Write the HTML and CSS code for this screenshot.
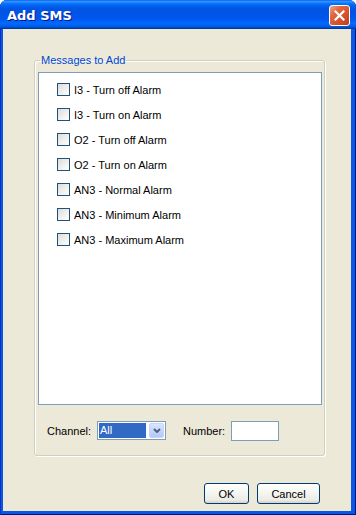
FILE: index.html
```html
<!DOCTYPE html>
<html lang="en">
<head>
  <meta charset="UTF-8">
  <title>Add SMS</title>
  <link rel="stylesheet" href="styles.css">
</head>
<body>
  <div class="window">
    <div class="titlebar">
      <span class="title">Add SMS</span>
      <button class="close" aria-label="Close">
        <svg width="11" height="11" viewBox="0 0 11 11"><path d="M1.5 1.5 L9.5 9.5 M9.5 1.5 L1.5 9.5" stroke="#fff" stroke-width="2.2" stroke-linecap="square"/></svg>
      </button>
    </div>
    <div class="client">
      <fieldset class="group">
        <legend>Messages to Add</legend>
        <div class="list">
          <label class="item"><span class="check"></span>I3 - Turn off Alarm</label>
          <label class="item"><span class="check"></span>I3 - Turn on Alarm</label>
          <label class="item"><span class="check"></span>O2 - Turn off Alarm</label>
          <label class="item"><span class="check"></span>O2 - Turn on Alarm</label>
          <label class="item"><span class="check"></span>AN3 - Normal Alarm</label>
          <label class="item"><span class="check"></span>AN3 - Minimum Alarm</label>
          <label class="item"><span class="check"></span>AN3 - Maximum Alarm</label>
        </div>
        <div class="controls">
          <span class="lbl channel-lbl">Channel:</span>
          <div class="combo">
            <span class="combo-value">All</span>
            <span class="combo-btn">
              <svg width="8" height="5" viewBox="0 0 8 5"><path d="M1 1 L4 4 L7 1" fill="none" stroke="#4d6185" stroke-width="2"/></svg>
            </span>
          </div>
          <span class="lbl number-lbl">Number:</span>
          <div class="field"></div>
        </div>
      </fieldset>
      <div class="buttons">
        <button class="btn ok">OK</button>
        <button class="btn cancel">Cancel</button>
      </div>
    </div>
  </div>
</body>
</html>
```

FILE: styles.css
```css
body {
  margin: 0;
  background: #fff;
  font-family: "Liberation Sans", Arial, sans-serif;
  font-size: 11px;
  color: #000;
}
.window {
  width: 356px;
  height: 515px;
  display: flex;
  flex-direction: column;
  background: #0a57e4;
  border-radius: 7px 7px 0 0;
  box-shadow: inset 1px 0 0 #0831c8, inset -1px -1px 0 #00138c;
  box-sizing: border-box;
  overflow: hidden;
}
.titlebar {
  height: 29px;
  flex: none;
  display: flex;
  align-items: center;
  padding: 0 6px 0 7px;
  background: linear-gradient(to bottom, #0058ee 0%, #3593ff 4%, #288eff 7%, #127dff 10%, #036ffc 14%, #0262ee 20%, #0057e5 28%, #0054e3 34%, #0055eb 60%, #005bf5 70%, #026afe 80%, #0062ef 88%, #0052d6 94%, #0040ab 97%, #003092 100%);
}
.title {
  flex: 1;
  color: #fff;
  font-family: "DejaVu Sans", Verdana, sans-serif;
  font-weight: bold;
  font-size: 13px;
  text-shadow: 1px 1px #0f1089;
  margin-top: 1px;
}
.close {
  width: 21px;
  height: 21px;
  padding: 0;
  border: 1px solid #fff;
  border-radius: 3px;
  background: linear-gradient(135deg, #f3a58c 0%, #e2673f 30%, #d5512b 65%, #c13c17 100%);
  display: flex;
  align-items: center;
  justify-content: center;
  margin-top: 1px;
}
.client {
  flex: 1;
  margin: 0 5px 4px 3px;
  background: #ece9d8;
  display: flex;
  flex-direction: column;
}
.group {
  margin: 25px 26px 0 31px;
  padding: 5px 2px 15px 3px;
  border: 1px solid #d0d0bf;
  border-radius: 3px;
  box-shadow: inset 1px 1px 0 #fff, 1px 1px 0 #fff;
  min-width: 0;
}
.group legend {
  color: #0046d5;
  padding: 0 1px;
  margin-left: 2px;
  line-height: 13px;
}
.list {
  height: 333px;
  box-sizing: border-box;
  border: 1px solid #7f9db9;
  background: #fff;
  padding: 4px 0 0 18px;
}
.item {
  height: 25px;
  display: flex;
  align-items: center;
  gap: 4px;
}
.check {
  width: 13px;
  height: 13px;
  box-sizing: border-box;
  border: 1px solid #1c5180;
  background: linear-gradient(135deg, #dcdcd7 0%, #f2f2ef 60%, #fff 100%);
}
.controls {
  display: flex;
  align-items: center;
  margin-top: 16px;
  padding-left: 9px;
  height: 19px;
}
.lbl {
  flex: none;
}
.channel-lbl {
  width: 50px;
}
.number-lbl {
  width: 48px;
  margin-left: 17px;
}
.combo {
  width: 69px;
  height: 19px;
  box-sizing: border-box;
  border: 1px solid #7f9db9;
  background: #fff;
  display: flex;
  align-items: stretch;
  padding: 1px;
  gap: 3px;
}
.combo-value {
  flex: 1;
  background: #316ac5;
  color: #fff;
  line-height: 15px;
  padding-left: 1px;
}
.combo-btn {
  width: 15px;
  border-radius: 2px;
  background: linear-gradient(to bottom, #dbe5fd 0%, #c1d3fb 60%, #b4c8f6 100%);
  border: 1px solid #c6d6fa;
  box-sizing: border-box;
  display: flex;
  align-items: center;
  justify-content: center;
}
.field {
  width: 48px;
  height: 20px;
  box-sizing: border-box;
  border: 1px solid #7f9db9;
  background: #fff;
}
.buttons {
  display: flex;
  justify-content: flex-end;
  gap: 8px;
  margin-top: 27px;
  padding-right: 31px;
}
.btn {
  height: 21px;
  padding: 0;
  font-family: "Liberation Sans", Arial, sans-serif;
  font-size: 11px;
  color: #000;
  border: 1px solid #003c74;
  border-radius: 3px;
  background: linear-gradient(to bottom, #fff 0%, #f4f4f0 50%, #ecebe6 85%, #d6d0c5 100%);
}
.ok {
  width: 45px;
}
.cancel {
  width: 63px;
}
```
